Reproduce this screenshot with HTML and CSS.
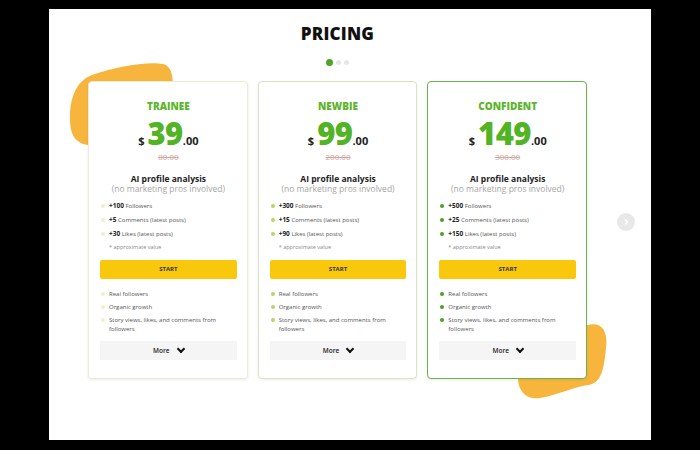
FILE: index.html
```html
<!DOCTYPE html>
<html lang="en">
<head>
  <meta charset="UTF-8">
  <title>Pricing</title>
  <link rel="stylesheet" href="styles.css">
</head>
<body>
  <div class="panel">
    <svg class="blob blob-top" width="105" height="85" viewBox="0 0 105 85">
      <path d="M24 12 C45 4 80 -2 95 1 C104 3 106 15 104 30 L100 80 L20 82 C6 80 2 70 2 55 C2 35 8 18 24 12 Z" fill="#f7b53d"/>
    </svg>
    <svg class="blob blob-bottom" width="90" height="78" viewBox="0 0 90 78">
      <path d="M10 10 L70 2 C85 -2 90 10 88 25 C86 45 84 60 70 62 C55 64 40 72 22 75 C8 77 0 68 0 55 Z" fill="#f7b53d"/>
    </svg>

    <div class="content">
      <h1>PRICING</h1>
      <div class="dots">
        <span class="dot active"></span><span class="dot"></span><span class="dot"></span>
      </div>

      <div class="cards">
        <div class="card c1">
          <div class="plan">TRAINEE</div>
          <div class="price"><span class="cur">$</span><span class="big">39</span><span class="cents">.00</span></div>
          <div class="old">80.00</div>
          <div class="ai">AI profile analysis</div>
          <div class="sub">(no marketing pros involved)</div>
          <ul class="list">
            <li><b>+100</b> Followers</li>
            <li><b>+5</b> Comments (latest posts)</li>
            <li><b>+30</b> Likes (latest posts)</li>
          </ul>
          <div class="note">* approximate value</div>
          <div class="start">START</div>
          <ul class="list extras">
            <li>Real followers</li>
            <li>Organic growth</li>
            <li>Story views, likes, and comments from followers</li>
          </ul>
          <div class="more">More <span class="chev"></span></div>
        </div>

        <div class="card c2">
          <div class="plan">NEWBIE</div>
          <div class="price"><span class="cur">$</span><span class="big">99</span><span class="cents">.00</span></div>
          <div class="old">200.00</div>
          <div class="ai">AI profile analysis</div>
          <div class="sub">(no marketing pros involved)</div>
          <ul class="list">
            <li><b>+300</b> Followers</li>
            <li><b>+15</b> Comments (latest posts)</li>
            <li><b>+90</b> Likes (latest posts)</li>
          </ul>
          <div class="note">* approximate value</div>
          <div class="start">START</div>
          <ul class="list extras">
            <li>Real followers</li>
            <li>Organic growth</li>
            <li>Story views, likes, and comments from followers</li>
          </ul>
          <div class="more">More <span class="chev"></span></div>
        </div>

        <div class="card c3">
          <div class="plan">CONFIDENT</div>
          <div class="price"><span class="cur">$</span><span class="big">149</span><span class="cents">.00</span></div>
          <div class="old">300.00</div>
          <div class="ai">AI profile analysis</div>
          <div class="sub">(no marketing pros involved)</div>
          <ul class="list">
            <li><b>+500</b> Followers</li>
            <li><b>+25</b> Comments (latest posts)</li>
            <li><b>+150</b> Likes (latest posts)</li>
          </ul>
          <div class="note">* approximate value</div>
          <div class="start">START</div>
          <ul class="list extras">
            <li>Real followers</li>
            <li>Organic growth</li>
            <li>Story views, likes, and comments from followers</li>
          </ul>
          <div class="more">More <span class="chev"></span></div>
        </div>
      </div>
    </div>

    <div class="next">
      <svg width="8" height="8" viewBox="0 0 8 8"><path d="M3 1.5 L5.5 4 L3 6.5" fill="none" stroke="#fff" stroke-width="1.6"/></svg>
    </div>
  </div>
</body>
</html>
```

FILE: styles.css
```css
body {
  margin: 0;
  background: #000;
  font-family: "Open Sans", Arial, sans-serif;
  color: #222;
}
.panel {
  position: relative;
  margin: 9px 49px 0;
  height: 431px;
  background: #fff;
}
.blob {
  position: absolute;
}
.blob-top {
  left: 19px;
  top: 54px;
}
.blob-bottom {
  left: 469px;
  top: 314px;
}
.content {
  position: relative;
  margin-left: 39px;
  width: 499px;
  padding-top: 14px;
}
h1 {
  margin: 0;
  text-align: center;
  font-size: 17px;
  line-height: 22px;
  font-weight: 800;
  color: #111;
  letter-spacing: 0.2px;
}
.dots {
  display: flex;
  justify-content: center;
  align-items: center;
  gap: 3px;
  margin-top: 13px;
  height: 8px;
}
.dot {
  width: 5px;
  height: 5px;
  border-radius: 50%;
  background: #e6e6e6;
}
.dot.active {
  width: 7px;
  height: 7px;
  background: #4ea524;
}
.cards {
  display: flex;
  gap: 10px;
  margin-top: 15px;
}
.card {
  position: relative;
  width: 160px;
  height: 298px;
  box-sizing: border-box;
  background: #fff;
  border: 1px solid #e9edd3;
  border-radius: 4px;
  box-shadow: 0 1px 3px rgba(0,0,0,0.08);
  padding: 0 10px 0 11px;
  text-align: center;
}
.c2 {
  border-color: #dbe5c0;
}
.c3 {
  border-color: #6bb24a;
}
.plan {
  margin-top: 18px;
  font-size: 10px;
  line-height: 12px;
  font-weight: 800;
  color: #5cb52b;
}
.price {
  margin-top: 8px;
  height: 26px;
  display: flex;
  justify-content: center;
  align-items: baseline;
  font-weight: 700;
}
.cur {
  font-size: 11px;
  margin-right: 3px;
}
.big {
  font-size: 31px;
  line-height: 26px;
  font-weight: 800;
  color: #52b324;
  letter-spacing: -0.5px;
}
.cents {
  font-size: 11px;
}
.old {
  margin-top: 6px;
  font-size: 8px;
  line-height: 10px;
  color: #d3a3a0;
  text-decoration: line-through;
}
.ai {
  margin-top: 12px;
  font-size: 8.5px;
  line-height: 10px;
  font-weight: 700;
  color: #222;
}
.sub {
  font-size: 8.5px;
  line-height: 10px;
  color: #a6a6a6;
}
.list {
  list-style: none;
  margin: 8px 0 0;
  padding: 0;
  text-align: left;
  font-size: 6px;
  color: #555;
}
.list li {
  position: relative;
  padding-left: 9px;
  margin: 0 0 5px;
  line-height: 9px;
}
.list li::before {
  content: "";
  position: absolute;
  left: 1px;
  top: 2px;
  width: 4px;
  height: 4px;
  border-radius: 50%;
  background: #eef1c4;
}
.c2 .list li::before {
  background: #b6d46e;
}
.c3 .list li::before {
  background: #4c9d29;
}
.list b {
  font-size: 6.5px;
  line-height: 8px;
  color: #222;
}
.note {
  text-align: left;
  padding-left: 9px;
  font-size: 5.5px;
  line-height: 8px;
  color: #888;
  margin-top: -1px;
}
.start {
  margin-top: 9px;
  height: 19px;
  line-height: 19px;
  background: #f9c70c;
  border-radius: 2px;
  font-size: 6px;
  font-weight: 700;
  color: #333;
}
.extras {
  margin-top: 11px;
}
.extras li {
  margin-bottom: 4px;
}
.more {
  margin-top: 7px;
  height: 19px;
  display: flex;
  justify-content: center;
  align-items: center;
  gap: 8px;
  background: #f5f5f5;
  font-size: 6.5px;
  font-weight: 600;
  color: #222;
}
.chev {
  width: 4px;
  height: 4px;
  border-right: 2px solid #111;
  border-bottom: 2px solid #111;
  transform: rotate(45deg);
  margin-top: -3px;
}
.next {
  position: absolute;
  left: 568px;
  top: 204px;
  width: 18px;
  height: 18px;
  border-radius: 50%;
  background: #e8e8e8;
  display: flex;
  justify-content: center;
  align-items: center;
}
```
